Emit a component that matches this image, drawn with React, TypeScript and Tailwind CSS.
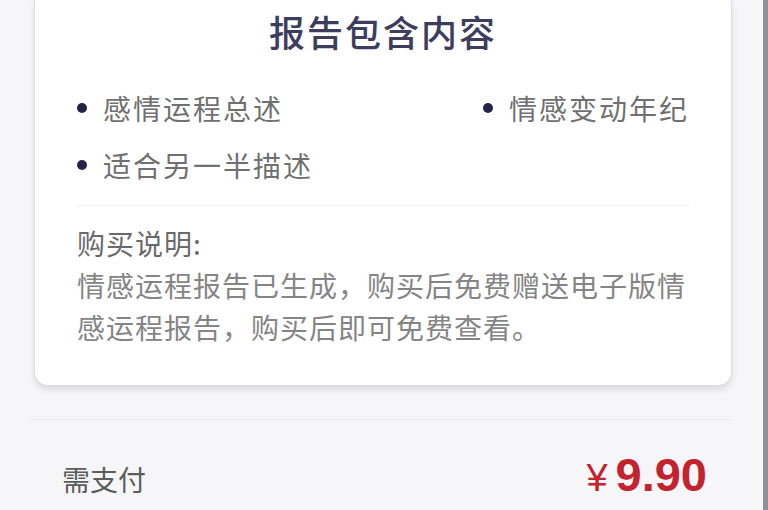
const CJK = "font-['Noto_Sans_CJK_SC','Noto_Sans',sans-serif]";

const items = [
  { label: "感情运程总述" },
  { label: "情感变动年纪" },
  { label: "适合另一半描述" },
];

function Bullet({ label }: { label: string }) {
  return (
    <div className="flex items-center h-[40px]">
      <span className="w-[10px] h-[10px] rounded-full bg-[#24244a] mr-[16px]" />
      <span className="text-[28px] leading-[40px] tracking-[2px] text-[#707070]">{label}</span>
    </div>
  );
}

export default function App() {
  return (
    <div className={`flex min-h-screen bg-[#f6f6f9] ${CJK}`}>
      <div className="flex-1 flex flex-col">
        <div className="ml-[34px] mr-[31px] bg-white border-x border-b border-[#dcdce2] rounded-b-[14px] shadow-[0_4px_6px_rgba(0,0,0,0.10)] px-[42px] pt-[10px] pb-[37px]">
          <h2 className="text-center text-[36px] leading-[42px] tracking-[2px] font-medium text-[#3d3d5e]">
            报告包含内容
          </h2>

          <div className="mt-[36px] grid grid-cols-[1fr_auto] gap-y-[17px]">
            {items.map((it) => (
              <Bullet key={it.label} label={it.label} />
            ))}
          </div>

          <div className="mt-[20px] h-px bg-[#f0f0f3]" />

          <div className="mt-[16px] text-[28px] leading-[42px] tracking-[1px]">
            <p className="text-[#6a6a6a]">购买说明:</p>
            <p className="text-[#858585]">
              情感运程报告已生成，购买后免费赠送电子版情感运程报告，购买后即可免费查看。
            </p>
          </div>
        </div>

        <div className="mt-[33px] mx-[30px] border-t border-[#ececf0] pl-[32px] pr-[26px] pt-[30px] flex items-center justify-between">
          <span className="text-[28px] leading-[50px] text-[#5c5c5c]">需支付</span>
          <span className="flex items-baseline text-[#c4222e] font-['Liberation_Sans',sans-serif]">
            <span className="text-[38px] mr-[8px]">¥</span>
            <span className="text-[47px] leading-[50px] font-bold">9.90</span>
          </span>
        </div>
      </div>
      <div className="w-[5px] bg-[#909096]" />
    </div>
  );
}
